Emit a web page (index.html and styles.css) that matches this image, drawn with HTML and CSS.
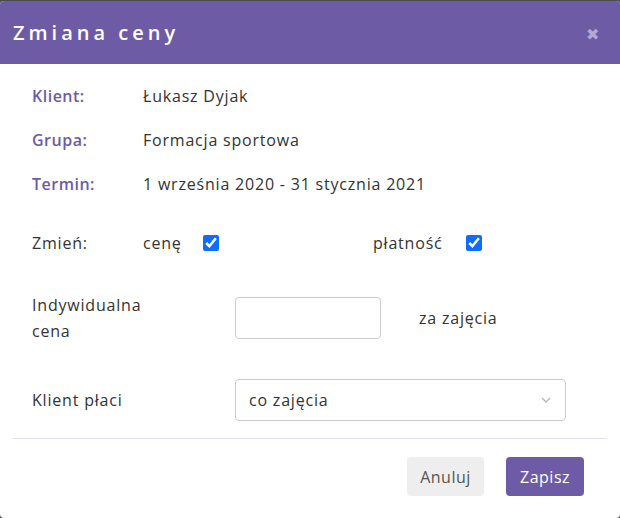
FILE: index.html
```html
<!DOCTYPE html>
<html lang="pl">
<head>
    <meta charset="UTF-8">
    <meta name="viewport" content="width=device-width, initial-scale=1.0">
    <title>Zmiana ceny</title>
    <link rel="stylesheet" href="styles.css">
</head>
<body>
<div class="modal">
    <div class="modal-header">
        <h2>Zmiana ceny</h2>
        <button class="close" type="button">&#x2716;</button>
    </div>
    <div class="modal-body">
        <div class="info-row">
            <span class="info-label">Klient:</span>
            <span class="info-value">Łukasz Dyjak</span>
        </div>
        <div class="info-row">
            <span class="info-label">Grupa:</span>
            <span class="info-value">Formacja sportowa</span>
        </div>
        <div class="info-row">
            <span class="info-label">Termin:</span>
            <span class="info-value">1 września 2020 - 31 stycznia 2021</span>
        </div>

        <div class="change-row">
            <span class="change-label">Zmień:</span>
            <label class="check check-price">cenę <input type="checkbox" checked></label>
            <label class="check check-payment">płatność <input type="checkbox" checked></label>
        </div>

        <div class="form-row">
            <label class="form-label" for="price">Indywidualna<br>cena</label>
            <input type="text" id="price" class="price-input">
            <span class="price-unit">za zajęcia</span>
        </div>

        <div class="form-row form-row-select">
            <label class="form-label" for="pays">Klient płaci</label>
            <div class="select-wrap">
                <select id="pays">
                    <option>co zajęcia</option>
                </select>
                <svg class="chevron" width="10" height="6" viewBox="0 0 10 6"><path d="M1 1l4 4 4-4" fill="none" stroke="#b5b5c0" stroke-width="1.3"/></svg>
            </div>
        </div>
    </div>
    <div class="modal-footer">
        <button class="btn btn-cancel" type="button">Anuluj</button>
        <button class="btn btn-save" type="button">Zapisz</button>
    </div>
</div>
</body>
</html>
```

FILE: styles.css
```css
body {
    margin: 0;
    padding: 1px 0 0 0;
    background-color: #4d4d4d;
    font-family: "Open Sans", Arial, sans-serif;
    color: #333;
}
.modal {
    width: 620px;
    height: 517px;
    background-color: white;
    border-radius: 4px;
    overflow: hidden;
    box-sizing: border-box;
}
.modal-header {
    height: 63px;
    background-color: #6e5ba6;
    display: flex;
    align-items: center;
    justify-content: space-between;
    padding: 0 21px 0 13px;
}
.modal-header h2 {
    margin: 0;
    color: white;
    font-size: 20px;
    font-weight: 600;
    letter-spacing: 4px;
}
.close {
    background: none;
    border: none;
    padding: 0;
    color: #b3a8d6;
    font-size: 16px;
    cursor: pointer;
    margin-top: 3px;
}
.modal-body {
    padding: 10px 32px 0 32px;
    font-size: 16px;
    letter-spacing: 0.8px;
}
.info-row {
    display: flex;
    align-items: center;
    height: 44px;
}
.info-label {
    width: 111px;
    color: #6e5ba6;
    font-weight: 600;
    letter-spacing: 0.5px;
}
.info-value {
    color: #333;
}
.change-row {
    display: flex;
    align-items: center;
    margin-top: 17px;
    height: 40px;
}
.change-label {
    width: 111px;
}
.check {
    display: flex;
    align-items: center;
}
.check-price {
    width: 230px;
    gap: 21px;
}
.check-payment {
    gap: 23px;
}
.check input {
    width: 16px;
    height: 16px;
    margin: 0;
    accent-color: #0d6efd;
}
.form-row {
    display: flex;
    align-items: center;
    margin-top: 29px;
}
.form-label {
    width: 203px;
    line-height: 26px;
}
.price-input {
    width: 146px;
    height: 42px;
    box-sizing: border-box;
    border: 1px solid #ccc;
    border-radius: 4px;
    padding: 0 12px;
    font-size: 16px;
}
.price-unit {
    margin-left: 38px;
}
.form-row-select {
    margin-top: 35px;
}
.select-wrap {
    position: relative;
}
.select-wrap select {
    width: 331px;
    height: 42px;
    box-sizing: border-box;
    border: 1px solid #ccc;
    border-radius: 4px;
    padding: 0 13px;
    font-family: inherit;
    font-size: 16px;
    letter-spacing: 0.8px;
    color: #333;
    background: white;
    appearance: none;
}
.chevron {
    position: absolute;
    right: 15px;
    top: 18px;
}
.modal-footer {
    margin: 17px 13px 0 13px;
    border-top: 1px solid #e2e1ea;
    padding-top: 18px;
    display: flex;
    justify-content: flex-end;
    gap: 22px;
    padding-right: 23px;
}
.btn {
    height: 39px;
    border: none;
    border-radius: 4px;
    font-family: inherit;
    font-size: 16px;
    letter-spacing: 0.5px;
    padding: 0;
    cursor: pointer;
}
.btn-cancel {
    width: 77px;
    background-color: #eeeeee;
    color: #555;
}
.btn-save {
    width: 78px;
    background-color: #6e5ba6;
    color: white;
}
```
